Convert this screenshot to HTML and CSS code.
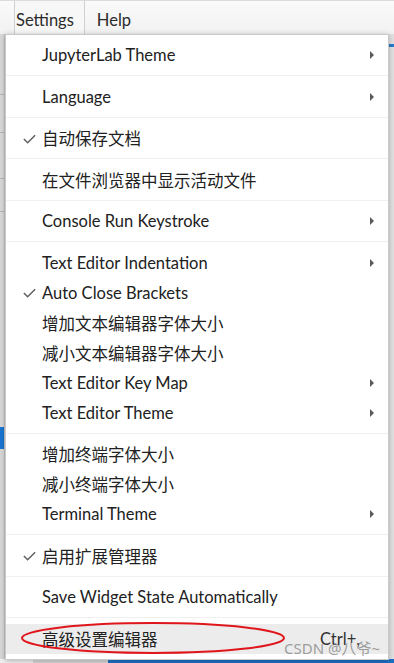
FILE: index.html
```html
<!DOCTYPE html>
<html lang="zh-CN">
<head>
  <meta charset="UTF-8" />
  <meta name="viewport" content="width=device-width, initial-scale=1.0"/>
  <title>Settings menu</title>
  <link rel="stylesheet" href="styles.css">
</head>
<body>

<div class="menubar">
  <div class="tab active">Settings</div>
  <div class="tab">Help</div>
</div>

<div class="workspace">
  <div class="leftbar">
    <div class="strip-line" style="height:60px"></div>
    <div class="strip-line" style="height:37px"></div>
    <div class="strip-line" style="height:45px"></div>
    <div class="strip-line" style="height:32px"></div>
    <div class="strip-blue"></div>
  </div>
  <div class="center"></div>
  <div class="rightbar"><div class="rb-blue"></div></div>
</div>
<div class="statusbar">
  <div class="sb-left"></div>
  <div class="sb-gray"></div>
  <div class="sb-blue"></div>
</div>

<div class="menu">
  <div class="item"><span class="icon"></span><span class="label">JupyterLab Theme</span><span class="arrow"></span></div>
  <div class="sep"></div>
  <div class="item"><span class="icon"></span><span class="label">Language</span><span class="arrow"></span></div>
  <div class="sep"></div>
  <div class="item"><span class="icon"><svg class="check" viewBox="0 0 16 16"><path d="M2 8.5 L6 12.5 L14 4.5"/></svg></span><span class="label">自动保存文档</span></div>
  <div class="sep"></div>
  <div class="item"><span class="icon"></span><span class="label">在文件浏览器中显示活动文件</span></div>
  <div class="sep"></div>
  <div class="item"><span class="icon"></span><span class="label">Console Run Keystroke</span><span class="arrow"></span></div>
  <div class="sep"></div>
  <div class="item"><span class="icon"></span><span class="label">Text Editor Indentation</span><span class="arrow"></span></div>
  <div class="item"><span class="icon"><svg class="check" viewBox="0 0 16 16"><path d="M2 8.5 L6 12.5 L14 4.5"/></svg></span><span class="label">Auto Close Brackets</span></div>
  <div class="item"><span class="icon"></span><span class="label">增加文本编辑器字体大小</span></div>
  <div class="item"><span class="icon"></span><span class="label">减小文本编辑器字体大小</span></div>
  <div class="item"><span class="icon"></span><span class="label">Text Editor Key Map</span><span class="arrow"></span></div>
  <div class="item"><span class="icon"></span><span class="label">Text Editor Theme</span><span class="arrow"></span></div>
  <div class="sep"></div>
  <div class="item"><span class="icon"></span><span class="label">增加终端字体大小</span></div>
  <div class="item"><span class="icon"></span><span class="label">减小终端字体大小</span></div>
  <div class="item"><span class="icon"></span><span class="label">Terminal Theme</span><span class="arrow"></span></div>
  <div class="sep"></div>
  <div class="item"><span class="icon"><svg class="check" viewBox="0 0 16 16"><path d="M2 8.5 L6 12.5 L14 4.5"/></svg></span><span class="label">启用扩展管理器</span></div>
  <div class="sep"></div>
  <div class="item"><span class="icon"></span><span class="label">Save Widget State Automatically</span></div>
  <div class="sep"></div>
  <div class="item hover"><span class="icon"></span><span class="label">高级设置编辑器</span><span class="shortcut">Ctrl+,</span></div>

  <svg class="circle" viewBox="0 0 270 36"><ellipse cx="135" cy="18" rx="131" ry="15"/></svg>
  <div class="watermark">CSDN @八爷~</div>
</div>

</body>
</html>
```

FILE: styles.css
```css
body {
  margin: 0;
  width: 394px;
  height: 663px;
  overflow: hidden;
  font-family: Lato, "Noto Sans CJK SC", sans-serif;
  color: #212121;
  background: #fff;
  position: relative;
  display: flex;
  flex-direction: column;
}
.menubar {
  height: 33px;
  border-top: 1px solid #dcdcdc;
  background: linear-gradient(#fafafa, #f2f2f2);
  display: flex;
  padding-left: 14px;
  font-size: 16.5px;
}
.tab {
  padding: 9px 10px 0 12px;
  color: #2b2b2b;
}
.tab.active {
  padding-left: 1px;
  background: #f7f7f7;
  border-left: 1px solid #d0d0d0;
  border-right: 1px solid #d0d0d0;
}
.workspace {
  flex: 1;
  display: flex;
}
.leftbar {
  width: 4px;
  background: #d9d9d9;
  border-right: 1px solid #c4c4c4;
  display: flex;
  flex-direction: column;
}
.strip-line {
  border-bottom: 1px solid #b5b5b5;
}
.strip-blue {
  margin-top: 215px;
  height: 22px;
  background: #1976d2;
}
.center {
  flex: 1;
}
.rightbar {
  width: 5px;
  background: #e2e2e2;
}
.rb-blue {
  margin-top: 10px;
  height: 3px;
  background: #2a7bd0;
}
.statusbar {
  height: 4px;
  display: flex;
}
.sb-left {
  width: 33px;
  background: #f0f0f0;
}
.sb-gray {
  width: 75px;
  background: #d6d6d6;
}
.sb-blue {
  flex: 1;
  background: #1e6fc4;
}
.menu {
  position: absolute;
  left: 5px;
  top: 34px;
  width: 382px;
  padding: 5px 0 5px;
  background: #fff;
  border: 1px solid #c9c9c9;
  box-shadow: 0 1px 6px rgba(0,0,0,0.25);
  font-size: 16.5px;
}
.item {
  height: 30px;
  display: flex;
  align-items: center;
}
.item.hover {
  background: #ececec;
}
.icon {
  width: 36px;
  display: flex;
  justify-content: center;
}
.check {
  width: 15px;
  height: 15px;
  margin-left: 11px;
  fill: none;
  stroke: #5f5f5f;
  stroke-width: 1.6;
}
.label {
  flex: 1;
  white-space: nowrap;
}
.arrow {
  width: 0;
  height: 0;
  margin-right: 14px;
  border-top: 4px solid transparent;
  border-bottom: 4px solid transparent;
  border-left: 4px solid #5a5a5a;
}
.shortcut {
  margin-right: 28px;
  color: #333;
}
.sep {
  height: 1px;
  margin: 5px 0 5.5px;
  background: #f0f0f0;
}
.circle {
  position: absolute;
  left: 12px;
  bottom: 3px;
  width: 270px;
  height: 36px;
  fill: none;
  stroke: #e0161d;
  stroke-width: 2;
}
.watermark {
  position: absolute;
  right: 8px;
  bottom: 1px;
  font-family: "Noto Sans", "Noto Sans CJK SC", sans-serif;
  font-size: 15px;
  color: rgba(120,120,120,0.7);
}
```
